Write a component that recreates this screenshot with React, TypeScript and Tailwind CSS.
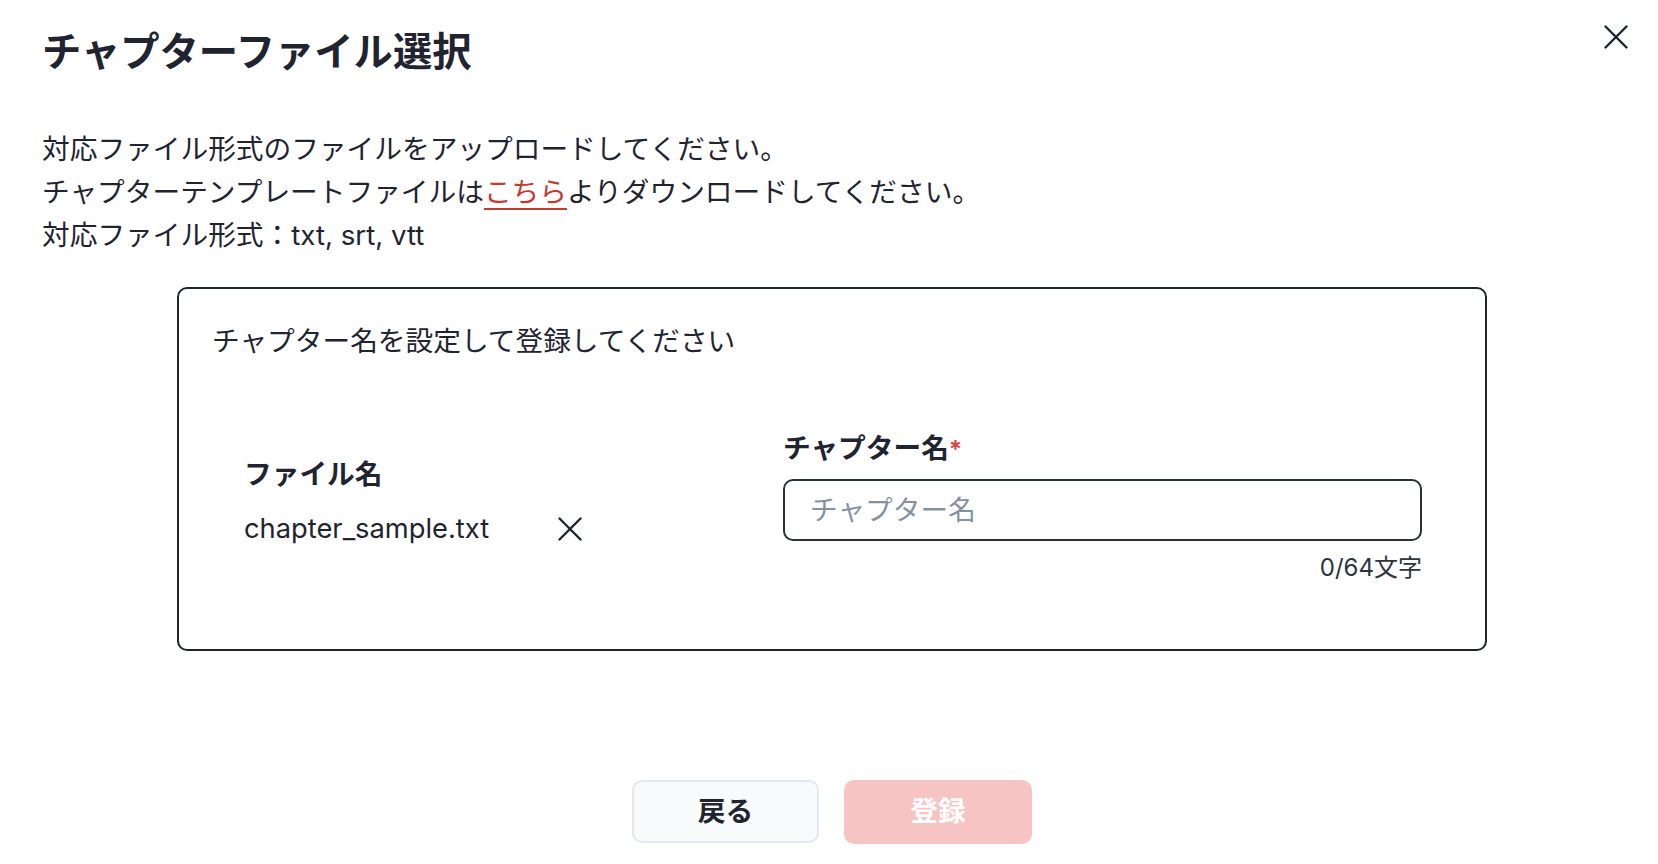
import React from "react";

function XIcon({ className }: { className?: string }) {
  return (
    <svg viewBox="0 0 24 24" className={className} fill="none" stroke="currentColor" strokeWidth={2.4} strokeLinecap="round">
      <line x1="1.5" y1="1.5" x2="22.5" y2="22.5" />
      <line x1="22.5" y1="1.5" x2="1.5" y2="22.5" />
    </svg>
  );
}

export default function App() {
  return (
    <div
      className="relative min-h-[864px] bg-white pl-[42px] pr-[36px] pt-[22px] text-[#1f2430]"
      style={{ fontFamily: '"Inter", "Noto Sans CJK JP", sans-serif' }}
    >
      <h1 className="text-[39.3px] leading-[60px] font-bold">チャプターファイル選択</h1>
      <button className="absolute top-[25px] right-[30px] w-[24px] h-[24px] text-[#1f2430]" aria-label="close">
        <XIcon className="w-[24px] h-[24px]" />
      </button>

      <div className="mt-[46px] text-[27.7px] leading-[43px]">
        <p>対応ファイル形式のファイルをアップロードしてください。</p>
        <p>
          チャプターテンプレートファイルは
          <a href="#" className="text-[#c23b31] underline decoration-2 underline-offset-[6px]">こちら</a>
          よりダウンロードしてください。
        </p>
        <p>対応ファイル形式：txt, srt, vtt</p>
      </div>

      <div className="mt-[30px] mx-auto w-[1310px] border-2 border-[#1f2430] rounded-[10px] px-[33px] pt-[32px] pb-[64px]">
        <p className="text-[27.7px] leading-[40px]">チャプター名を設定して登録してください</p>
        <div className="mt-[67px] flex items-center pl-[32px] pr-[30px]">
          <div className="w-[539px] shrink-0 pb-[10px]">
            <div className="text-[27.7px] leading-[40px] font-bold">ファイル名</div>
            <div className="mt-[15px] flex items-center">
              <span className="text-[27.3px] leading-[40px]">chapter_sample.txt</span>
              <button className="ml-[68px] w-[26px] h-[24px] text-[#1f2430]" aria-label="remove">
                <XIcon className="w-[26px] h-[24px]" />
              </button>
            </div>
          </div>
          <div className="flex-1">
            <div className="text-[27.7px] leading-[40px] font-bold">
              チャプター名
              <span className="text-[#d64541] text-[24px]">*</span>
            </div>
            <input
              className="mt-[9px] block w-full h-[62px] border-2 border-[#2b303b] rounded-[10px] px-[25px] text-[27.7px] outline-none placeholder:text-[#8591a3]"
              placeholder="チャプター名"
            />
            <div className="mt-[10px] text-right text-[24px] leading-[34px] text-[#2d3340]">0/64文字</div>
          </div>
        </div>
      </div>

      <div className="mt-[129px] flex justify-center gap-[25px]">
        <button className="w-[187px] h-[63px] rounded-[10px] border-2 border-[#e2e8f0] bg-[#f8fafc] text-[27.7px] font-bold text-[#1f2430]">
          戻る
        </button>
        <button className="w-[188px] h-[64px] rounded-[10px] bg-[#f5c4c3] text-[27.7px] font-bold text-white">
          登録
        </button>
      </div>
    </div>
  );
}
